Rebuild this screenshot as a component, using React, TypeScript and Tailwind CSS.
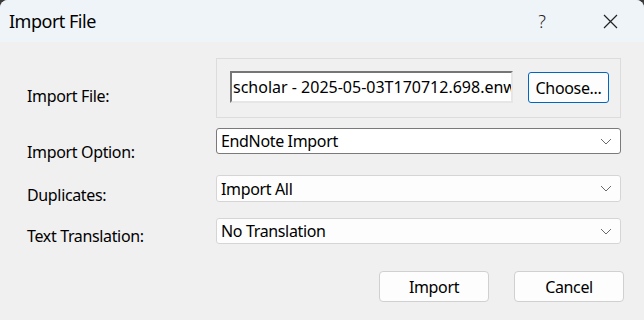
import React from 'react';

function Chevron() {
  return (
    <svg width="12" height="7" viewBox="0 0 12 7" fill="none" className="text-[#6a6a6a]">
      <polyline points="1,1 6,6 11,1" stroke="currentColor" strokeWidth="1" />
    </svg>
  );
}

function Select({ value, active }: { value: string; active?: boolean }) {
  return (
    <div
      className={
        'flex items-center justify-between w-[405px] h-full rounded-[3px] border pl-[4px] pr-[8px] ' +
        (active ? 'border-[#7a7a7a] bg-white' : 'border-[#d5d5d5] bg-[#fdfdfd]')
      }
    >
      <span className="text-[16px] leading-[20px] text-black tracking-[-0.35px]">{value}</span>
      <Chevron />
    </div>
  );
}

export default function App() {
  return (
    <div className="w-[644px] h-[320px] bg-[#3b3b3b] font-['Noto_Sans',sans-serif]">
      <div className="w-full h-full rounded-t-[8px] overflow-hidden bg-[#f0f0f0] flex flex-col">
        {/* title bar */}
        <div className="h-[42px] bg-[#eef4f8] flex items-center pl-[9px] pr-[26px] shrink-0">
          <span className="text-[18px] text-black tracking-[-0.5px] flex-1">Import File</span>
          <span className="text-[18px] text-[#222] mr-[57px] font-light">?</span>
          <svg width="15" height="15" viewBox="0 0 15 15" className="text-[#222]">
            <path d="M1 1 L14 14 M14 1 L1 14" stroke="currentColor" strokeWidth="1.2" />
          </svg>
        </div>

        <div className="flex flex-col pt-[16px] pl-[27px] text-[16px] leading-[20px] text-black tracking-[-0.35px]">
          {/* import file */}
          <div className="flex h-[60px]">
            <div className="w-[189px] pt-[28px]">Import File:</div>
            <div className="w-[405px] h-[60px] border border-[#dcdcdc] flex items-start pl-[13px] pt-[12px] gap-[15px]">
              <div className="w-[283px] h-[32px] bg-white border-2 border-t-[#767676] border-l-[#767676] border-r-[#e6e6e6] border-b-[#e6e6e6] pl-[1px] overflow-hidden whitespace-nowrap flex items-center">
                <span className="text-[16px] leading-[20px] tracking-normal">scholar - 2025-05-03T170712.698.enw</span>
              </div>
              <button className="w-[81px] h-[31px] mt-[1px] rounded-[3px] border border-[#0067c0] bg-[#fdfdfd] text-[16px] leading-[20px] text-black">
                Choose...
              </button>
            </div>
          </div>

          {/* import option */}
          <div className="flex h-[26px] mt-[10px]">
            <div className="w-[189px] pt-[14px]">Import Option:</div>
            <Select value="EndNote Import" active />
          </div>

          {/* duplicates */}
          <div className="flex h-[27px] mt-[21px]">
            <div className="w-[189px] pt-[10px]">Duplicates:</div>
            <Select value="Import All" />
          </div>

          {/* text translation */}
          <div className="flex h-[26px] mt-[16px]">
            <div className="w-[189px] pt-[8px]">Text Translation:</div>
            <Select value="No Translation" />
          </div>

          {/* buttons */}
          <div className="flex justify-end gap-[25px] mt-[27px] pr-[20px]">
            <button className="w-[110px] h-[31px] rounded-[4px] border border-[#d0d0d0] bg-[#fdfdfd] text-[16px] leading-[20px] text-black">
              Import
            </button>
            <button className="w-[110px] h-[31px] rounded-[4px] border border-[#d0d0d0] bg-[#fdfdfd] text-[16px] leading-[20px] text-black">
              Cancel
            </button>
          </div>
        </div>
      </div>
    </div>
  );
}
